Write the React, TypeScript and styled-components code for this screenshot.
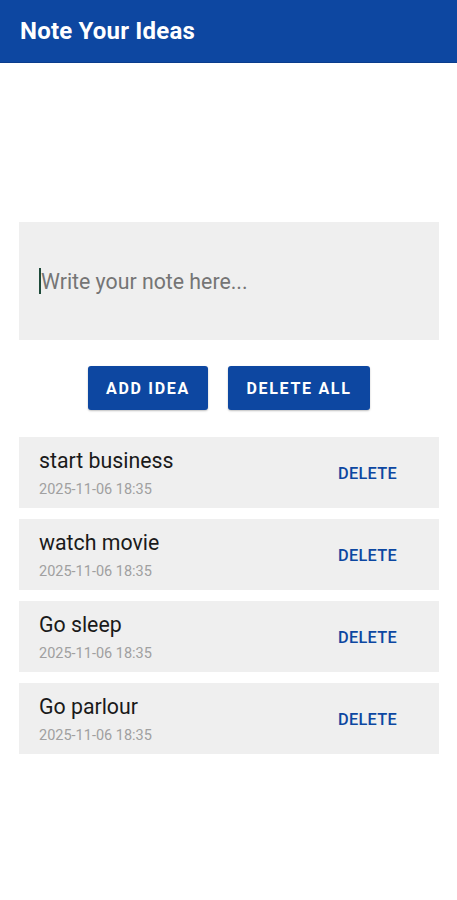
import styled, { createGlobalStyle } from "styled-components";

const GlobalStyle = createGlobalStyle`
  body {
    margin: 0;
    background: #ffffff;
    font-family: Roboto, "Noto Sans", "Liberation Sans", sans-serif;
  }
`;

const Page = styled.div`
  width: 457px;
  min-height: 900px;
  background: #ffffff;
`;

const TopBar = styled.header`
  height: 62px;
  background: #0d47a1;
  border-bottom: 1px solid #0a3c8c;
  display: flex;
  align-items: center;
  padding-left: 20px;
`;

const Title = styled.h1`
  margin: 0;
  color: #ffffff;
  font-size: 24px;
  font-weight: 700;
  letter-spacing: 0.2px;
`;

const Content = styled.main`
  padding: 159px 18px 0 19px;
  display: flex;
  flex-direction: column;
`;

const NoteBox = styled.div`
  height: 118px;
  background: #efefef;
  display: flex;
  align-items: center;
  padding-left: 20px;
`;

const Caret = styled.span`
  width: 2px;
  height: 26px;
  background: #1e4a3a;
`;

const Placeholder = styled.span`
  font-size: 21.3px;
  color: #757575;
`;

const Actions = styled.div`
  display: flex;
  justify-content: center;
  gap: 20px;
  margin: 26px 0 27px;
`;

const ActionButton = styled.button<{ $width: number }>`
  width: ${(p) => p.$width}px;
  height: 44px;
  border: none;
  border-radius: 3px;
  background: #0d47a1;
  color: #ffffff;
  font-family: inherit;
  font-size: 16px;
  font-weight: 700;
  letter-spacing: 1.7px;
  box-shadow: 0 1px 2px rgba(0, 0, 0, 0.25);
`;

const NoteList = styled.div`
  display: flex;
  flex-direction: column;
  gap: 11px;
`;

const NoteCard = styled.div`
  height: 71px;
  background: #efefef;
  display: flex;
  align-items: center;
  justify-content: space-between;
  padding: 0 42px 0 20px;
`;

const NoteText = styled.div`
  display: flex;
  flex-direction: column;
  gap: 10px;
  margin-top: 2px;
`;

const NoteTitle = styled.span`
  font-size: 21.3px;
  line-height: 22px;
  color: #1a1a1a;
`;

const NoteDate = styled.span`
  font-size: 14.5px;
  line-height: 16px;
  color: #a0a0a0;
`;

const DeleteLink = styled.button`
  border: none;
  background: none;
  padding: 0;
  margin-top: 2px;
  color: #0d47a1;
  font-family: inherit;
  font-size: 16.3px;
  font-weight: 500;
  letter-spacing: 0.3px;
`;

const notes = [
  { title: "start business", date: "2025-11-06 18:35" },
  { title: "watch movie", date: "2025-11-06 18:35" },
  { title: "Go sleep", date: "2025-11-06 18:35" },
  { title: "Go parlour", date: "2025-11-06 18:35" },
];

export default function App() {
  return (
    <Page>
      <GlobalStyle />
      <TopBar>
        <Title>Note Your Ideas</Title>
      </TopBar>
      <Content>
        <NoteBox>
          <Caret />
          <Placeholder>Write your note here...</Placeholder>
        </NoteBox>
        <Actions>
          <ActionButton $width={120}>ADD IDEA</ActionButton>
          <ActionButton $width={142}>DELETE ALL</ActionButton>
        </Actions>
        <NoteList>
          {notes.map((note, i) => (
            <NoteCard key={i}>
              <NoteText>
                <NoteTitle>{note.title}</NoteTitle>
                <NoteDate>{note.date}</NoteDate>
              </NoteText>
              <DeleteLink>DELETE</DeleteLink>
            </NoteCard>
          ))}
        </NoteList>
      </Content>
    </Page>
  );
}
